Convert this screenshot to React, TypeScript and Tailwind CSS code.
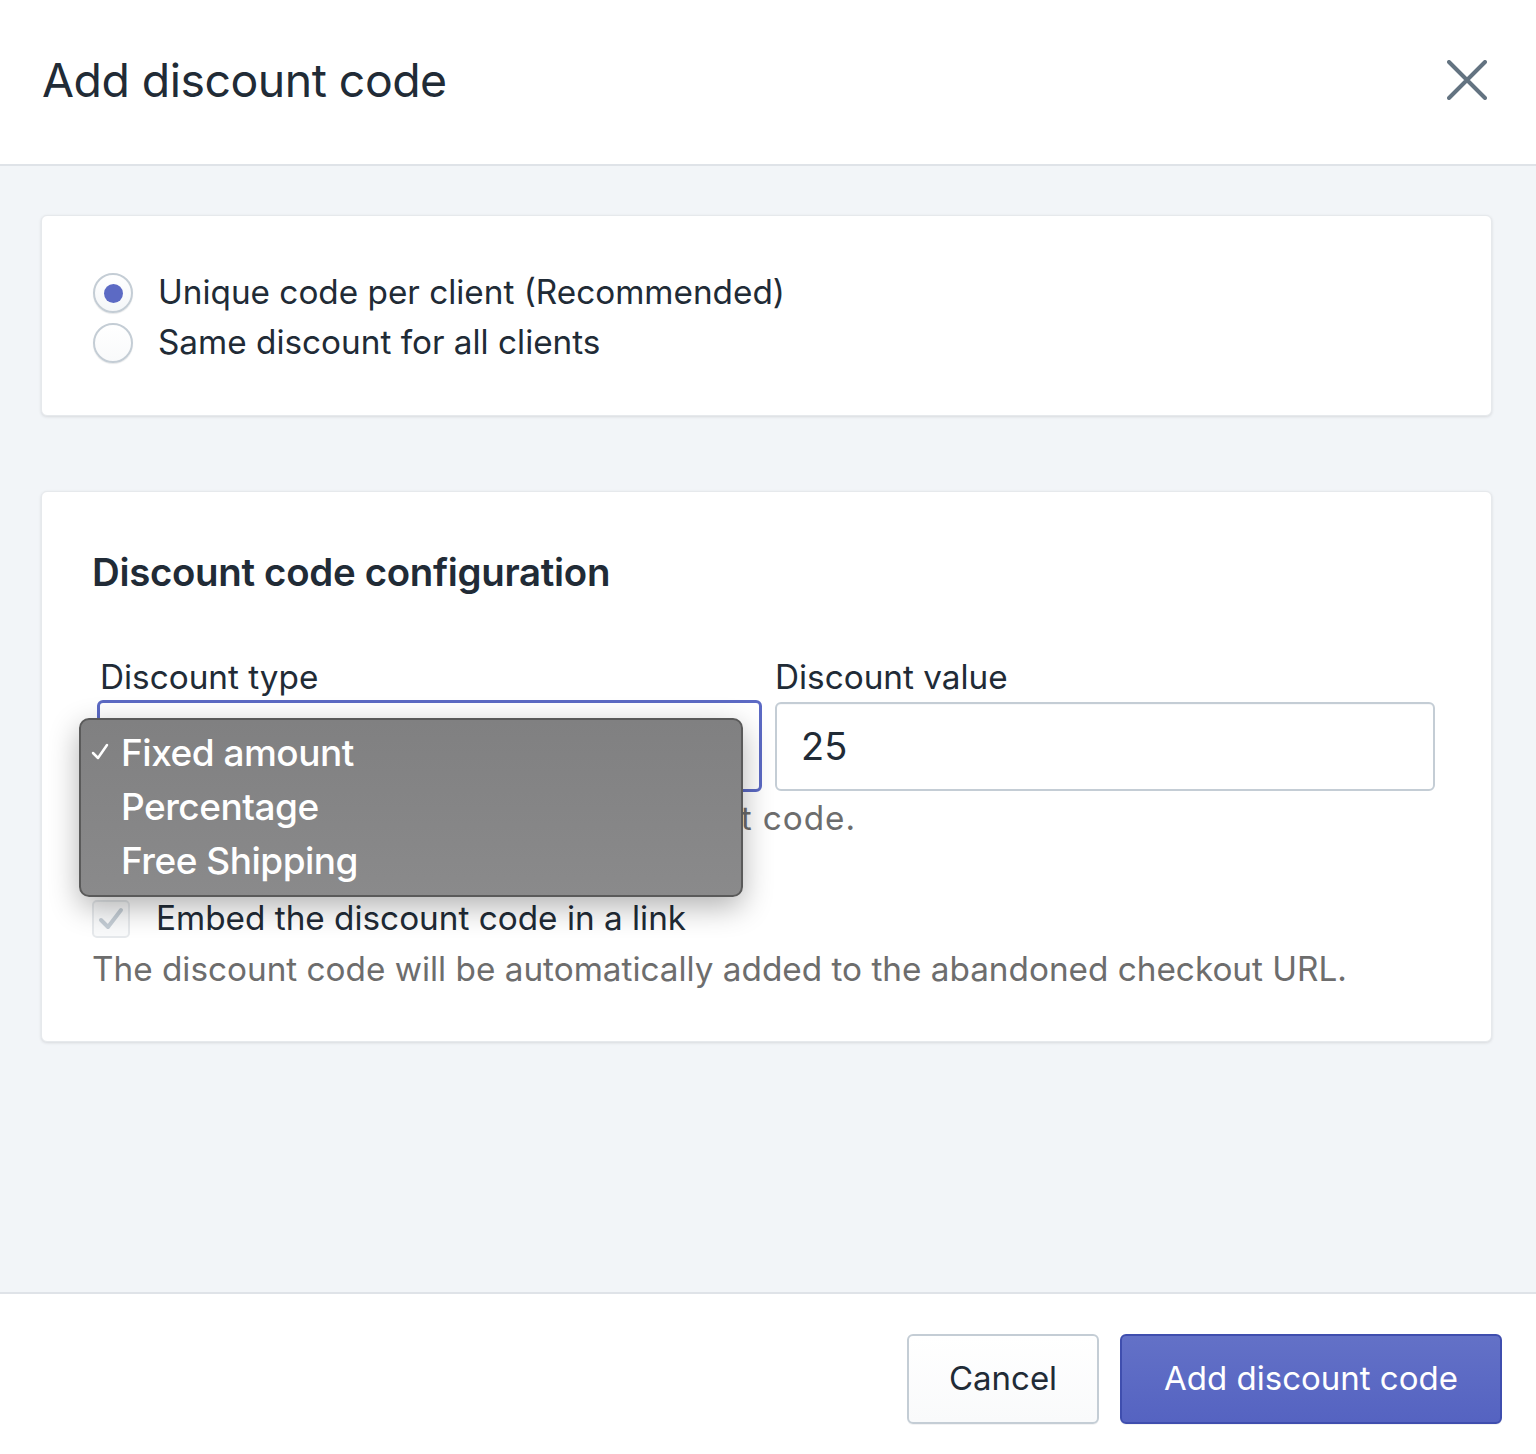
import React from "react";

const font = { fontFamily: "Inter, 'Noto Sans', sans-serif" };

export default function App() {
  return (
    <div className="w-[1536px] h-[1454px] flex flex-col bg-white text-[#212b36]" style={font}>
      {/* Header */}
      <div className="h-[166px] shrink-0 flex items-center justify-between pl-[42px] pr-[49px] border-b-2 border-[#dfe3e8] pb-[4px]">
        <h1 className="text-[46.4px] leading-none font-normal tracking-[-0.5px]">Add discount code</h1>
        <svg width="40" height="40" viewBox="0 0 40 40">
          <path d="M2 2 L38 38 M38 2 L2 38" stroke="#637381" strokeWidth="4" strokeLinecap="round" />
        </svg>
      </div>

      {/* Body */}
      <div className="flex-1 bg-[#f2f5f8] pt-[49px] pl-[41px] pr-[44px] flex flex-col gap-[75px]">
        {/* Card 1 */}
        <div className="h-[201px] bg-white rounded-[6px] border border-[#e6e9ec] shadow-[0_1px_3px_rgba(63,63,68,0.15)] pl-[51px] pt-[57px] flex flex-col gap-[10px]">
          <label className="flex items-center gap-[25px] h-[40px]">
            <span className="w-[40px] h-[40px] rounded-full border-2 border-[#c4cdd5] bg-gradient-to-b from-white to-[#f4f6f8] shadow-[0_1px_1px_rgba(22,29,37,0.1)] flex items-center justify-center">
              <span className="w-[19px] h-[19px] rounded-full bg-[#5c6ac4]" />
            </span>
            <span className="text-[33.3px] leading-none">Unique code per client (Recommended)</span>
          </label>
          <label className="flex items-center gap-[25px] h-[40px]">
            <span className="w-[40px] h-[40px] rounded-full border-2 border-[#c4cdd5] bg-gradient-to-b from-white to-[#f9fafb] shadow-[0_1px_1px_rgba(22,29,37,0.1)]" />
            <span className="text-[33.3px] leading-none">Same discount for all clients</span>
          </label>
        </div>

        {/* Card 2 */}
        <div className="h-[551px] bg-white rounded-[6px] border border-[#e6e9ec] shadow-[0_1px_3px_rgba(63,63,68,0.15)] pl-[50px] pr-[56px] pt-[61px]">
          <h2 className="text-[38.4px] leading-none font-semibold tracking-[-0.3px]">Discount code configuration</h2>

          <div className="mt-[70px] flex gap-[13px]">
            <div className="w-[665px] ml-[5px] flex flex-col">
              <div className="pl-[3px] text-[33.3px] leading-none h-[39px]">Discount type</div>
              <div className="relative">
                <div className="h-[92px] rounded-[6px] border-[3px] border-[#5c6ac4] bg-white" />
                {/* Dropdown menu */}
                <div className="absolute left-[-18px] top-[18px] w-[664px] h-[179px] rounded-[10px] border-2 border-[#5a5a5a] bg-gradient-to-b from-[#808081] to-[#8a8a8b] shadow-[0_10px_30px_rgba(0,0,0,0.3)] z-10 pt-[5px] flex flex-col">
                  {[
                    { t: "Fixed amount", c: true },
                    { t: "Percentage", c: false },
                    { t: "Free Shipping", c: false },
                  ].map((it) => (
                    <div key={it.t} className="h-[54px] flex items-center text-white">
                      <span className="w-[40px] flex justify-end pr-[12px]">
                        {it.c ? (
                          <svg width="18" height="18" viewBox="0 0 18 18">
                            <path d="M2 10 L7 15 L16 2" stroke="white" strokeWidth="2.5" fill="none" strokeLinecap="round" strokeLinejoin="round" />
                          </svg>
                        ) : null}
                      </span>
                      <span className="text-[37px] leading-none font-medium tracking-[-0.5px]">{it.t}</span>
                    </div>
                  ))}
                </div>
              </div>
              <div className="mt-[10px] pl-[3px] text-[33.3px] leading-none text-[#6d6d6d] whitespace-nowrap tracking-[0.95px]">
                The discount applied with this discount code.
              </div>
            </div>
            <div className="flex-1 flex flex-col">
              <div className="text-[33.3px] leading-none h-[41px]">Discount value</div>
              <div className="h-[89px] rounded-[6px] border-2 border-[#c4cdd5] bg-white flex items-center pl-[24px] text-[38px] text-[#212b36] shadow-[inset_0_1px_0_rgba(99,115,129,0.05)]">
                25
              </div>
            </div>
          </div>

          <div className="mt-[63px] flex items-center gap-[26px] h-[40px]">
            <span className="w-[38px] h-[38px] rounded-[5px] border-2 border-[#e6e9ec] bg-[#f9fafb] flex items-center justify-center">
              <svg width="28" height="28" viewBox="0 0 28 28">
                <path d="M4 15 L11 22 L24 5" stroke="#c4cdd5" strokeWidth="4" fill="none" strokeLinecap="round" strokeLinejoin="round" />
              </svg>
            </span>
            <span className="text-[33.3px] leading-none">Embed the discount code in a link</span>
          </div>
          <div className="mt-[14px] text-[33.3px] leading-none text-[#6d6d6d]">
            The discount code will be automatically added to the abandoned checkout URL.
          </div>
        </div>
      </div>

      {/* Footer */}
      <div className="h-[162px] shrink-0 border-t-2 border-[#dfe3e8] bg-white flex items-center justify-end gap-[21px] pr-[34px] pt-[10px]">
        <button className="w-[192px] h-[90px] rounded-[6px] border-2 border-[#c4cdd5] bg-gradient-to-b from-white to-[#f9fafb] shadow-[0_1px_0_rgba(22,29,37,0.05)] text-[33px] text-[#212b36]">
          Cancel
        </button>
        <button className="w-[382px] h-[90px] rounded-[6px] border-2 border-[#3f4eae] bg-gradient-to-b from-[#6371c7] to-[#5563c1] shadow-[0_1px_0_rgba(22,29,37,0.05)] text-[33px] text-white">
          Add discount code
        </button>
      </div>
    </div>
  );
}
